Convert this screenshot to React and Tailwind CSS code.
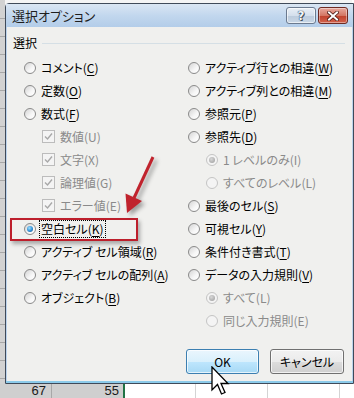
import React from 'react';

const leftItems = [
  { label: 'コメント', k: 'C' },
  { label: '定数', k: 'O' },
  { label: '数式', k: 'F' },
  { label: '数値', k: 'U', box: true, indent: true, disabled: true },
  { label: '文字', k: 'X', box: true, indent: true, disabled: true },
  { label: '論理値', k: 'G', box: true, indent: true, disabled: true },
  { label: 'エラー値', k: 'E', box: true, indent: true, disabled: true },
  { label: '空白セル', k: 'K', checked: true, focus: true },
  { label: 'アクティブ セル領域', k: 'R' },
  { label: 'アクティブ セルの配列', k: 'A' },
  { label: 'オブジェクト', k: 'B' },
];

const rightItems = [
  { label: 'アクティブ行との相違', k: 'W' },
  { label: 'アクティブ列との相違', k: 'M' },
  { label: '参照元', k: 'P' },
  { label: '参照先', k: 'D' },
  { label: '1 レベルのみ', k: 'I', indent: true, disabled: true, checked: true },
  { label: 'すべてのレベル', k: 'L', indent: true, disabled: true },
  { label: '最後のセル', k: 'S' },
  { label: '可視セル', k: 'Y' },
  { label: '条件付き書式', k: 'T' },
  { label: 'データの入力規則', k: 'V' },
  { label: 'すべて', k: 'L', indent: true, disabled: true, checked: true },
  { label: '同じ入力規則', k: 'E', indent: true, disabled: true },
];

const Radio = ({ checked, disabled }) => (
  <span
    className={`flex items-center justify-center w-[12px] h-[12px] rounded-full border shrink-0 ${
      disabled
        ? 'border-[#c4c4c4] bg-[#f4f4f4]'
        : 'border-[#8a8a8a] bg-[linear-gradient(135deg,#d4d4d4,#f7f7f7_60%,#ffffff)]'
    }`}
  >
    {checked && (
      <span
        className={`w-[6px] h-[6px] rounded-full ${
          disabled
            ? 'bg-[radial-gradient(circle_at_40%_35%,#d8d8d8,#9a9a9a)]'
            : 'bg-[radial-gradient(circle_at_40%_35%,#9fe0ff,#2f8fd6_55%,#14497e)]'
        }`}
      />
    )}
  </span>
);

const Check = () => (
  <span className="flex items-center justify-center w-[13px] h-[13px] border border-[#bcbcbc] bg-[#f4f4f4] shrink-0">
    <svg width="9" height="9" viewBox="0 0 9 9">
      <path d="M1 4.5 L3.5 7 L8 1.5" fill="none" stroke="#a8a8a8" strokeWidth="1.4" />
    </svg>
  </span>
);

const Item = ({ label, k, box, indent, disabled, checked, focus }) => (
  <div className={`flex items-center h-[23px] gap-[5px] ${indent ? 'pl-[18px]' : ''}`}>
    {box ? <Check /> : <Radio checked={checked} disabled={disabled} />}
    <span
      className={`leading-[14px] whitespace-nowrap ${disabled ? 'text-[#8a8a8a]' : 'text-black'} ${
        focus ? 'outline outline-1 outline-dotted outline-black outline-offset-[1px]' : ''
      }`}
    >
      {label}(
      {disabled ? k : <span className="underline underline-offset-2">{k}</span>})
    </span>
  </div>
);

const App = () => {
  return (
    <div className="relative w-[354px] h-[398px] overflow-hidden bg-white font-['Noto_Sans_CJK_JP',sans-serif] [font-feature-settings:'palt'] text-[12px]">
      {/* spreadsheet behind the dialog */}
      <div className="flex flex-col h-full">
        <div className="flex flex-1">
          <div className="w-[5px] bg-[#d2d2d2] bg-[repeating-linear-gradient(to_bottom,transparent_0,transparent_17px,#a8a8a8_17px,#a8a8a8_18px)] bg-[position:0_1px]" />
          <div className="flex-1 bg-[#f4f4f4]" />
          <div className="w-[2px] bg-white bg-[repeating-linear-gradient(to_bottom,transparent_0,transparent_17px,#d4d4d4_17px,#d4d4d4_18px)] bg-[position:0_1px]" />
        </div>
        <div className="flex h-[14px] font-['Liberation_Sans',sans-serif] text-[13px] leading-[14px] text-[#1a1a1a]">
          <div className="w-[52px] bg-[#cfcfcf] border-r border-[#a8a8a8] text-right pr-[5px]">67</div>
          <div className="w-[71px] bg-[#cfcfcf] text-right pr-[4px]">55</div>
          <div className="w-[2px] bg-[#217346]" />
          <div className="w-[71px] border-r border-[#d4d4d4]" />
          <div className="w-[72px] border-r border-[#d4d4d4]" />
          <div className="w-[72px] border-r border-[#d4d4d4]" />
          <div className="flex-1" />
        </div>
      </div>

      {/* dialog window */}
      <div className="absolute left-[5px] top-[3px] w-[349px] h-[381px] flex flex-col border border-[#3f4a59] rounded-tl-[4px] bg-[#bcd3ec]">
        <div className="flex items-start h-[23px] bg-[linear-gradient(to_bottom,#dae6f3,#c2d7ee_50%,#b3cde9)]">
          <span className="pl-[6px] pt-[4px] text-[13px] leading-[15px] text-[#1e1e1e]">選択オプション</span>
          <div className="ml-auto flex gap-[2px] pt-[3px] pr-[5px]">
            <div className="flex items-center justify-center w-[30px] h-[17px] rounded-[3px] border border-[#6b7a8f] bg-[linear-gradient(to_bottom,#e9eff6,#d4dfec_50%,#bccbdc_51%,#c9d7e6)] shadow-[inset_0_0_0_1px_rgba(255,255,255,0.6)]">
              <span className="font-['DejaVu_Sans',sans-serif] text-[12px] leading-[12px] font-bold text-[#f4f7fb] [text-shadow:0_0_1px_#2b3542,0_0_1px_#2b3542,1px_1px_0_#4a5668]">?</span>
            </div>
            <div className="flex items-center justify-center w-[30px] h-[17px] rounded-[3px] border border-[#6e2a22] bg-[linear-gradient(to_bottom,#e8a99e,#d47764_50%,#c0412c_51%,#d2624c)] shadow-[inset_0_0_0_1px_rgba(255,255,255,0.4)]">
              <svg width="12" height="10" viewBox="0 0 12 10">
                <path d="M2 1.5 L10 8.5 M10 1.5 L2 8.5" stroke="#4b1a14" strokeWidth="3.6" strokeLinecap="square" />
                <path d="M2 1.5 L10 8.5 M10 1.5 L2 8.5" stroke="#ffffff" strokeWidth="2" strokeLinecap="square" />
              </svg>
            </div>
          </div>
        </div>

        <div className="flex-1 flex flex-col ml-[1px] mr-[1px] mb-[2px] bg-[#f0f0ee]">
          <div className="flex items-center mt-[9px] h-[14px] pl-[6px] pr-[7px] gap-[5px]">
            <span className="text-black leading-[14px]">選択</span>
            <div className="flex-1 h-px bg-[#d5dfe5]" />
          </div>

          <div className="grid grid-cols-[164px_1fr] mt-[6px] pl-[17px]">
            <div className="flex flex-col">
              {leftItems.map((it, i) => (
                <Item key={i} {...it} />
              ))}
            </div>
            <div className="flex flex-col">
              {rightItems.map((it, i) => (
                <Item key={i} {...it} />
              ))}
            </div>
          </div>

          <div className="flex justify-end gap-[11px] mt-[17px] pr-[8px]">
            <button className="w-[73px] h-[25px] rounded-[3px] border border-[#3c7fb1] bg-[linear-gradient(to_bottom,#eaf6fd,#d9f0fc_50%,#bee6fd_51%,#a7d9f5)] shadow-[inset_0_0_0_1px_rgba(255,255,255,0.7)] text-[12px] text-black leading-[14px]">
              OK
            </button>
            <button className="w-[74px] h-[25px] rounded-[3px] border border-[#707070] bg-[linear-gradient(to_bottom,#f2f2f2,#ebebeb_50%,#dddddd_51%,#cfcfcf)] shadow-[inset_0_0_0_1px_rgba(255,255,255,0.7)] text-[12px] text-black leading-[14px]">
              キャンセル
            </button>
          </div>
        </div>
        <div className="absolute left-0 right-0 bottom-0 h-[2px] bg-[#8ccbea]" />
      </div>

      {/* annotation: red frame */}
      <div className="absolute left-[10px] top-[218px] w-[128px] h-[23px] border-[2.5px] border-[#bd1f2c] shadow-[2px_3px_4px_rgba(0,0,0,0.3)]" />

      {/* annotation: red arrow */}
      <svg className="absolute left-0 top-0 pointer-events-none drop-shadow-[3px_3px_2px_rgba(0,0,0,0.35)]" width="354" height="398">
        <path d="M153 157 L134 198" stroke="#c0232d" strokeWidth="3" />
        <polygon points="127,213 125.5,193.5 142,201" fill="#c0232d" />
      </svg>

      {/* mouse cursor */}
      <svg className="absolute left-[211px] top-[366px] pointer-events-none" width="20" height="32" viewBox="0 0 20 32">
        <path d="M1 1 L1 24 L6.5 18.5 L10.5 28 L14 26.5 L10 17.5 L17 17.5 Z" fill="#ffffff" stroke="#000000" strokeWidth="1.3" strokeLinejoin="miter" />
      </svg>
    </div>
  );
};

export default App;
